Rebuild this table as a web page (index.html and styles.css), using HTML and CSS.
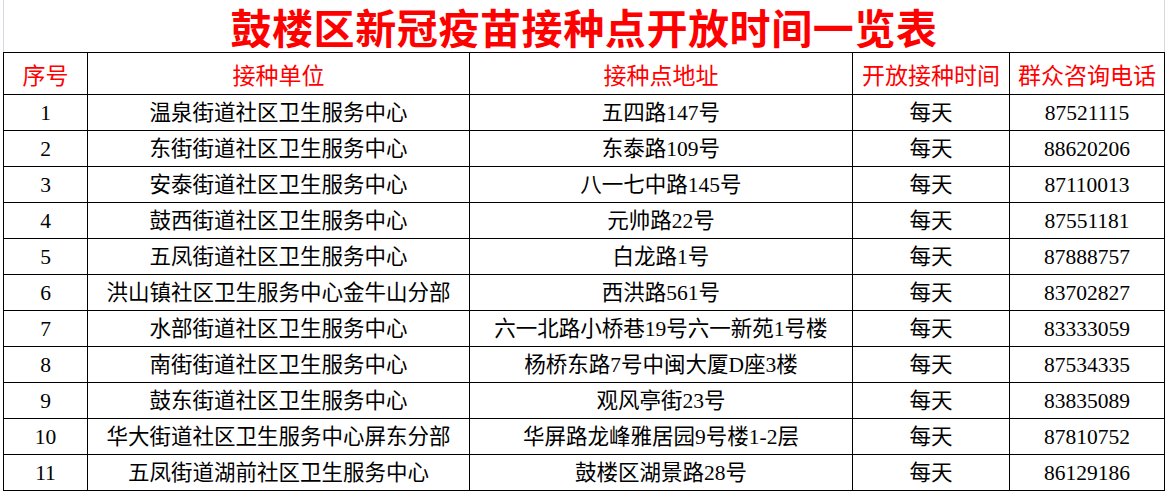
FILE: index.html
```html
<!DOCTYPE html>
<html lang="zh-CN">
<head>
<meta charset="utf-8">
<title>鼓楼区新冠疫苗接种点开放时间一览表</title>
<link rel="stylesheet" href="styles.css">
</head>
<body>
<div class="sheet">
  <div class="title"><span class="title-text">鼓楼区新冠疫苗接种点开放时间一览表</span></div>
  <table class="grid">
    <colgroup>
      <col class="c-no"><col class="c-unit"><col class="c-addr"><col class="c-time"><col class="c-tel">
    </colgroup>
    <thead>
      <tr><th>序号</th><th>接种单位</th><th>接种点地址</th><th>开放接种时间</th><th>群众咨询电话</th></tr>
    </thead>
    <tbody>
      <tr><td>1</td><td>温泉街道社区卫生服务中心</td><td>五四路147号</td><td>每天</td><td>87521115</td></tr>
      <tr><td>2</td><td>东街街道社区卫生服务中心</td><td>东泰路109号</td><td>每天</td><td>88620206</td></tr>
      <tr><td>3</td><td>安泰街道社区卫生服务中心</td><td>八一七中路145号</td><td>每天</td><td>87110013</td></tr>
      <tr><td>4</td><td>鼓西街道社区卫生服务中心</td><td>元帅路22号</td><td>每天</td><td>87551181</td></tr>
      <tr><td>5</td><td>五凤街道社区卫生服务中心</td><td>白龙路1号</td><td>每天</td><td>87888757</td></tr>
      <tr><td>6</td><td>洪山镇社区卫生服务中心金牛山分部</td><td>西洪路561号</td><td>每天</td><td>83702827</td></tr>
      <tr><td>7</td><td>水部街道社区卫生服务中心</td><td>六一北路小桥巷19号六一新苑1号楼</td><td>每天</td><td>83333059</td></tr>
      <tr><td>8</td><td>南街街道社区卫生服务中心</td><td>杨桥东路7号中闽大厦D座3楼</td><td>每天</td><td>87534335</td></tr>
      <tr><td>9</td><td>鼓东街道社区卫生服务中心</td><td>观风亭街23号</td><td>每天</td><td>83835089</td></tr>
      <tr><td>10</td><td>华大街道社区卫生服务中心屏东分部</td><td>华屏路龙峰雅居园9号楼1-2层</td><td>每天</td><td>87810752</td></tr>
      <tr><td>11</td><td>五凤街道湖前社区卫生服务中心</td><td>鼓楼区湖景路28号</td><td>每天</td><td>86129186</td></tr>
    </tbody>
  </table>
</div>
</body>
</html>
```

FILE: styles.css
```css
html, body {
  margin: 0;
  padding: 0;
  background: #ffffff;
}
body {
  font-family: "Liberation Serif", "Noto Sans CJK SC", serif;
  color: #000000;
  overflow: hidden;
}
.sheet {
  margin-left: 3px;
  width: 1162px;
}
.title {
  height: 52px;
  box-sizing: border-box;
  border-left: 1px solid #d4d8e0;
  border-right: 1px solid #d4d8e0;
  display: flex;
  align-items: center;
  justify-content: center;
}
.title-text {
  color: #ff0000;
  font-family: "Noto Sans CJK SC", sans-serif;
  font-weight: 700;
  font-size: 41px;
  letter-spacing: 0.6px;
  line-height: 52px;
  white-space: nowrap;
}
.grid {
  border-collapse: collapse;
  table-layout: fixed;
  width: 1162px;
}
.c-no { width: 84px; }
.c-unit { width: 382px; }
.c-addr { width: 383px; }
.c-time { width: 157px; }
.c-tel { width: 155px; }
.grid th, .grid td {
  border: 1px solid #000000;
  padding: 0;
  text-align: center;
  white-space: nowrap;
  overflow: hidden;
}
.grid th {
  height: 40px;
  color: #ff0000;
  font-weight: 400;
  font-size: 23px;
  padding-top: 1px;
}
.grid td {
  height: 35px;
  font-size: 21.5px;
  padding-top: 2px;
  line-height: 33px;
  box-sizing: border-box;
}
```
